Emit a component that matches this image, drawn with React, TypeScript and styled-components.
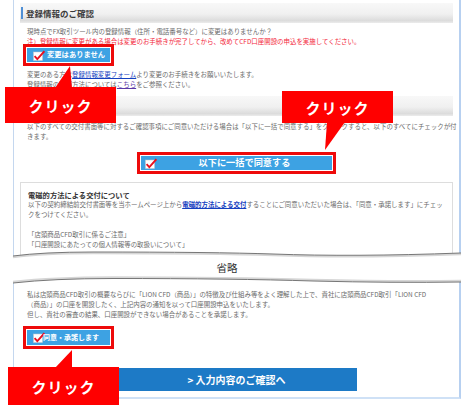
import React from "react";
import styled, { createGlobalStyle } from "styled-components";

const GlobalStyle = createGlobalStyle`
  html, body {
    margin: 0;
    padding: 0;
    background: #ffffff;
  }
  body {
    font-family: "Noto Sans CJK JP", "Noto Sans", sans-serif;
    color: #555;
  }
`;

const CheckIcon = () => (
  <CheckSvg viewBox="0 0 12 11" width={12} height={11}>
    <rect x="0.5" y="2" width="9" height="8.5" fill="#fff" stroke="#c8c8c8" strokeWidth="0.5" />
    <path d="M1.6 6.2 L4.3 9.2 L11.4 1.2" fill="none" stroke="#e8101e" strokeWidth="1.8" />
  </CheckSvg>
);

const Callout = (props: { x: number; y: number; w: number; h: number; children?: React.ReactNode }) => (
  <CalloutBox $x={props.x} $y={props.y} $w={props.w} $h={props.h}>
    {props.children}
    クリック
  </CalloutBox>
);

const App = () => {
  return (
    <>
      <GlobalStyle />
      <Page>
        <TopFrame>
          <Header>登録情報のご確認</Header>
          <Text $mt={4}>
            現時点でFX取引ツール内の登録情報（住所・電話番号など）に変更はありませんか？
          </Text>
          <Text $red>
            注）登録情報に変更がある場合は変更のお手続きが完了してから、改めてCFD口座開設の申込を実施してください。
          </Text>
          <ButtonRow $mt={1} $indent={7}>
            <CheckButton $w={83} $h={14}>
              <CheckIcon />
              <Label $size={7.3} $ml={2}>変更はありません</Label>
            </CheckButton>
          </ButtonRow>
          <Text $mt={8}>
            変更のある方は<Link href="#">登録情報変更フォーム</Link>より変更のお手続きをお願いいたします。
            <br />
            登録情報の変更方法については<Link href="#" $visited>こちら</Link>をご参照ください。
          </Text>

          <Header $mt={6} />
          <Text $mt={6}>
            以下のすべての交付書面等に対するご確認事項にご同意いただける場合は「以下に一括で同意する」をクリックすると、以下のすべてにチェックが付
            <br />
            きます。
          </Text>
          <ButtonRow $mt={14} $center>
            <CheckButton $w={191} $h={14} $pad={4}>
              <CheckIcon />
              <Label $size={9.2} $grow>以下に一括で同意する</Label>
            </CheckButton>
          </ButtonRow>

          <InfoBox>
            <InfoTitle>電磁的方法による交付について</InfoTitle>
            <BoxText>
              以下の契約締結前交付書面等を当ホームページ上から<Link href="#" $strong>電磁的方法による交付</Link>することにご同意いただいた場合は、「同意・承諾します」にチェッ
              <br />
              クをつけてください。
              <br />
              <br />
              「店頭商品CFD取引に係るご注意」
              <br />
              「口座開設にあたっての個人情報等の取扱いについて」
            </BoxText>
          </InfoBox>
        </TopFrame>

        <Tear>
          <TearSvg viewBox="0 0 448 40" width={448} height={40} preserveAspectRatio="none">
            <path
              d="M0 6 Q30 2 80 2 Q200 2 260 4 Q340 7 448 3 L448 32 Q380 33 300 31 Q220 28.5 100 28.5 Q40 28.5 0 33 Z"
              fill="#ffffff"
            />
            <path d="M0 7.2 Q30 3.2 80 3.2 Q200 3.2 260 5.2 Q340 8.2 448 4.2" fill="none" stroke="#d6d6d6" strokeWidth="2.2" />
            <path d="M0 6 Q30 2 80 2 Q200 2 260 4 Q340 7 448 3" fill="none" stroke="#777" strokeWidth="1" />
            <path d="M0 31.8 Q40 27.3 100 27.3 Q220 27.3 300 29.8 Q380 31.8 448 30.8" fill="none" stroke="#d6d6d6" strokeWidth="2.2" />
            <path d="M0 33 Q40 28.5 100 28.5 Q220 28.5 300 31 Q380 33 448 32" fill="none" stroke="#777" strokeWidth="1" />
          </TearSvg>
          <TearLabel>省略</TearLabel>
        </Tear>

        <BottomFrame>
          <Text>
            私は店頭商品CFD取引の概要ならびに「LION CFD（商品）」の特徴及び仕組み等をよく理解した上で、貴社に店頭商品CFD取引「LION CFD
            <br />
            （商品）」の口座を開設したく、上記内容の通知を以って口座開設申込をいたします。
            <br />
            但し、貴社の審査の結果、口座開設ができない場合があることを承諾します。
          </Text>
          <ButtonRow $mt={10} $indent={7}>
            <CheckButton $w={83} $h={15}>
              <CheckIcon />
              <Label $size={7} $ml={-2}>同意・承諾します</Label>
            </CheckButton>
          </ButtonRow>
          <ButtonRow $mt={23} $center>
            <NextButton>&gt; 入力内容のご確認へ</NextButton>
          </ButtonRow>
        </BottomFrame>

        <Callout x={5} y={87} w={111} h={36}>
          <Pointer viewBox="0 0 22 24" width={22} height={24} $left={48} $top={-22}>
            <polygon points="2,23 17,1 19,23" fill="#ff0000" />
          </Pointer>
        </Callout>
        <Callout x={282} y={91} w={111} h={32}>
          <Pointer viewBox="0 0 24 30" width={24} height={30} $left={41} $top={30}>
            <polygon points="4,1 22,1 2,29" fill="#ff0000" />
          </Pointer>
        </Callout>
        <Callout x={8} y={367} w={111} h={38}>
          <Pointer viewBox="0 0 22 19" width={22} height={19} $left={45} $top={-18}>
            <polygon points="2,19 19,1 19,19" fill="#ff0000" />
          </Pointer>
        </Callout>
      </Page>
    </>
  );
};

export default App;

const Page = styled.div`
  position: relative;
  width: 471px;
  height: 415px;
  box-sizing: border-box;
  padding: 0 10px 0 13px;
  overflow: hidden;
  background: #ffffff;
`;

const TopFrame = styled.div`
  height: 256px;
  box-sizing: border-box;
  overflow: hidden;
  padding: 3px 6px 0 6px;
  border-left: 1px solid #c4d7ef;
  border-right: 2px solid #b7d0f0;
`;

const Header = styled.div<{ $mt?: number }>`
  display: flex;
  align-items: center;
  height: 20px;
  margin-top: ${(p) => p.$mt ?? 0}px;
  padding-left: 1px;
  background: linear-gradient(#f8f8f8 0%, #f0f0f0 55%, #dcdcdc 88%, #ececec 100%);
  font-size: 8.5px;
  font-weight: 700;
  color: #3a3a3a;
  white-space: nowrap;

  &::before {
    content: "";
    width: 2px;
    height: 12px;
    margin-right: 3px;
    background: #4f8fd5;
  }
`;

const Text = styled.p<{ $mt?: number; $red?: boolean }>`
  margin: ${(p) => p.$mt ?? 0}px 0 0;
  padding: 0 7px;
  font-size: 6.45px;
  line-height: 10px;
  color: ${(p) => (p.$red ? "#f3263a" : "#6a6a6a")};
  white-space: nowrap;
`;

const Link = styled.a<{ $visited?: boolean; $strong?: boolean }>`
  color: ${(p) => (p.$visited ? "#5b3aa8" : "#1540c0")};
  text-decoration: underline;
  font-weight: ${(p) => (p.$strong ? 700 : 400)};
`;

const ButtonRow = styled.div<{ $mt?: number; $indent?: number; $center?: boolean }>`
  display: flex;
  justify-content: ${(p) => (p.$center ? "center" : "flex-start")};
  margin-top: ${(p) => p.$mt ?? 0}px;
  padding-left: ${(p) => p.$indent ?? 0}px;
`;

const CheckButton = styled.button<{ $w: number; $h: number; $pad?: number }>`
  display: flex;
  align-items: center;
  box-sizing: border-box;
  width: ${(p) => p.$w}px;
  height: ${(p) => p.$h}px;
  padding: 0 0 0 ${(p) => p.$pad ?? 6}px;
  border: none;
  background: #3da2e3;
  color: #ffffff;
  font-family: inherit;
  outline: 3px solid #ee0a0a;
  outline-offset: 1px;
  cursor: pointer;
`;

const CheckSvg = styled.svg`
  flex: none;
  display: block;
`;

const Label = styled.span<{ $size: number; $ml?: number; $grow?: boolean }>`
  flex: ${(p) => (p.$grow ? 1 : "none")};
  margin-left: ${(p) => p.$ml ?? 0}px;
  font-size: ${(p) => p.$size}px;
  font-weight: 700;
  line-height: 1;
  text-align: center;
  white-space: nowrap;
`;

const InfoBox = styled.div`
  margin-top: 12px;
  padding: 7px 7px 30px;
  border: 1px solid #dddddd;
`;

const InfoTitle = styled.div`
  font-size: 7.3px;
  line-height: 10px;
  font-weight: 700;
  color: #333333;
  white-space: nowrap;
`;

const BoxText = styled.p`
  margin: 0;
  font-size: 6.45px;
  line-height: 10px;
  color: #6a6a6a;
  white-space: nowrap;
`;

const Tear = styled.div`
  position: relative;
  display: flex;
  align-items: center;
  justify-content: center;
  height: 25px;
  padding-right: 20px;
`;

const TearSvg = styled.svg`
  position: absolute;
  left: 0;
  top: -6px;
  overflow: visible;
`;

const TearLabel = styled.span`
  position: relative;
  font-size: 10.5px;
  line-height: 1;
  color: #333333;
`;

const BottomFrame = styled.div`
  padding: 9px 6px 6px 6px;
  border-left: 1px solid #c4d7ef;
  border-right: 2px solid #b7d0f0;
  border-bottom: 2px solid #cfe1f6;
`;

const NextButton = styled.button`
  width: 240px;
  height: 23px;
  border: none;
  background: #1d7ac6;
  color: #ffffff;
  font-family: inherit;
  font-size: 10px;
  font-weight: 700;
  white-space: nowrap;
  cursor: pointer;
`;

const CalloutBox = styled.div<{ $x: number; $y: number; $w: number; $h: number }>`
  position: absolute;
  left: ${(p) => p.$x}px;
  top: ${(p) => p.$y}px;
  width: ${(p) => p.$w}px;
  height: ${(p) => p.$h}px;
  display: flex;
  align-items: center;
  justify-content: center;
  background: #ff0000;
  color: #ffffff;
  font-size: 15px;
  font-weight: 700;
  letter-spacing: 1px;
  z-index: 2;
`;

const Pointer = styled.svg<{ $left: number; $top: number }>`
  position: absolute;
  left: ${(p) => p.$left}px;
  top: ${(p) => p.$top}px;
  display: block;
`;
